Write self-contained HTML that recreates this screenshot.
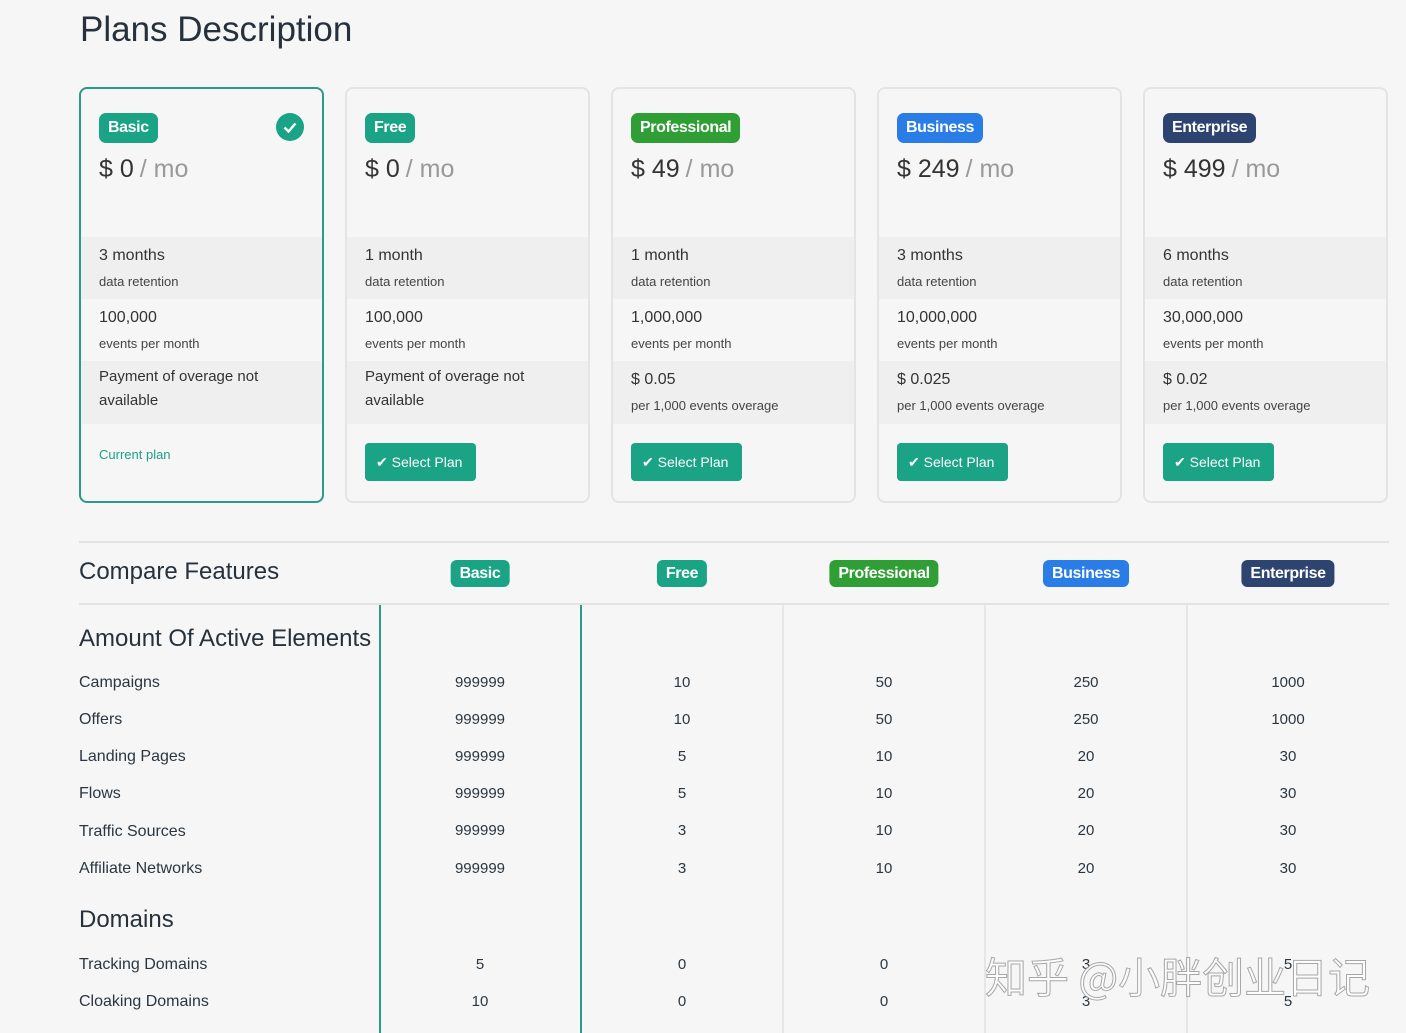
<!DOCTYPE html>
<html><head><meta charset="utf-8"><style>
*{box-sizing:border-box;margin:0;padding:0}
body{width:1406px;height:1033px;background:#f6f6f6;font-family:"Liberation Sans",sans-serif;color:#2f3a45;position:relative;overflow:hidden}
.a{position:absolute}
h1{position:absolute;left:80px;top:10px;font-size:35px;font-weight:normal;color:#27313b}
.card{position:absolute;top:87px;width:245px;height:416px;border:2px solid #e4e4e4;border-radius:8px;background:#f6f6f6;overflow:hidden}
.card.sel{border-color:#2b9a87}
.badge{position:absolute;left:18px;top:24px;height:30px;line-height:29px;padding:0 9px;border-radius:7px;color:#fff;font-weight:bold;font-size:16px;letter-spacing:-0.4px}
.t{background:#1aa385}.g{background:#2f9e35}.b{background:#2a7de6}.e{background:#2e4470}
.price{position:absolute;left:18px;top:66px;font-size:25px;color:#333}
.price span{color:#999;margin-left:6px}
.row{position:absolute;left:0;right:0;padding-left:18px}
.r1{top:148px;height:62px;background:#efefef}
.r2{top:210px;height:62px}
.r3{top:272px;height:63px;background:#efefef}
.big{font-size:16px;color:#333;margin-top:10px}
.sm{font-size:13px;color:#444;margin-top:9px}
.btn{position:absolute;left:18px;top:354px;width:111px;height:38px;background:#1aa385;color:#fff;border-radius:4px;font-size:14px;line-height:38px;padding-left:11px}
.cur{position:absolute;left:18px;top:358px;color:#1aa385;font-size:13px}
.chk{position:absolute;right:18px;top:24px;width:28px;height:28px;border-radius:50%;background:#1aa385}
.hl{position:absolute;left:79px;width:1310px;height:2px;background:#e3e3e3}
.cb{position:absolute;top:560px;height:27px;line-height:27px;padding:0 9px;border-radius:6px;color:#fff;font-weight:bold;font-size:16px;transform:translateX(-50%);letter-spacing:-0.4px}
.vl{position:absolute;top:605px;height:428px;width:2px;background:#e6e6e6}
.lab{position:absolute;left:79px;font-size:16px;color:#2b3640}
.v{position:absolute;font-size:15px;transform:translateX(-50%);color:#2b3640}
h2{position:absolute;left:79px;font-size:24px;font-weight:normal;color:#27313b}
</style></head><body>
<h1>Plans Description</h1>

<div class="card sel" style="left:79px"><div class="badge t">Basic</div><div class="chk"><svg width="28" height="28"><path d="M8.5 14.5l4 4 7-8" stroke="#fff" stroke-width="2.4" fill="none"/></svg></div><div class="price">$ 0<span>/ mo</span></div>
<div class="row r1"><div class="big">3 months</div><div class="sm">data retention</div></div>
<div class="row r2"><div class="big">100,000</div><div class="sm">events per month</div></div>
<div class="row r3"><div style="font-size:15px;line-height:24px;margin-top:4px;color:#333">Payment of overage not<br>available</div></div>
<div class="cur">Current plan</div></div>

<div class="card" style="left:345px"><div class="badge t">Free</div><div class="price">$ 0<span>/ mo</span></div>
<div class="row r1"><div class="big">1 month</div><div class="sm">data retention</div></div>
<div class="row r2"><div class="big">100,000</div><div class="sm">events per month</div></div>
<div class="row r3"><div style="font-size:15px;line-height:24px;margin-top:4px;color:#333">Payment of overage not<br>available</div></div>
<div class="btn">✔ Select Plan</div></div>

<div class="card" style="left:611px"><div class="badge g">Professional</div><div class="price">$ 49<span>/ mo</span></div>
<div class="row r1"><div class="big">1 month</div><div class="sm">data retention</div></div>
<div class="row r2"><div class="big">1,000,000</div><div class="sm">events per month</div></div>
<div class="row r3"><div class="big">$ 0.05</div><div class="sm">per 1,000 events overage</div></div>
<div class="btn">✔ Select Plan</div></div>

<div class="card" style="left:877px"><div class="badge b">Business</div><div class="price">$ 249<span>/ mo</span></div>
<div class="row r1"><div class="big">3 months</div><div class="sm">data retention</div></div>
<div class="row r2"><div class="big">10,000,000</div><div class="sm">events per month</div></div>
<div class="row r3"><div class="big">$ 0.025</div><div class="sm">per 1,000 events overage</div></div>
<div class="btn">✔ Select Plan</div></div>

<div class="card" style="left:1143px"><div class="badge e">Enterprise</div><div class="price">$ 499<span>/ mo</span></div>
<div class="row r1"><div class="big">6 months</div><div class="sm">data retention</div></div>
<div class="row r2"><div class="big">30,000,000</div><div class="sm">events per month</div></div>
<div class="row r3"><div class="big">$ 0.02</div><div class="sm">per 1,000 events overage</div></div>
<div class="btn">✔ Select Plan</div></div>

<div class="hl" style="top:541px"></div>
<div class="a" style="left:79px;top:558px;font-size:24px;color:#27313b">Compare Features</div>
<div class="cb t" style="left:480px">Basic</div>
<div class="cb t" style="left:682px">Free</div>
<div class="cb g" style="left:884px">Professional</div>
<div class="cb b" style="left:1086px">Business</div>
<div class="cb e" style="left:1288px">Enterprise</div>
<div class="hl" style="top:603px"></div>
<div class="vl" style="left:379px;background:#2b9a87"></div>
<div class="vl" style="left:580px;background:#2b9a87"></div>
<div class="vl" style="left:782px"></div>
<div class="vl" style="left:984px"></div>
<div class="vl" style="left:1186px"></div>

<h2 style="top:625px">Amount Of Active Elements</h2>
<div class="lab" style="top:674px">Campaigns</div>
<div class="lab" style="top:711px">Offers</div>
<div class="lab" style="top:748px">Landing Pages</div>
<div class="lab" style="top:785px">Flows</div>
<div class="lab" style="top:823px">Traffic Sources</div>
<div class="lab" style="top:860px">Affiliate Networks</div>
<h2 style="top:906px">Domains</h2>
<div class="lab" style="top:956px">Tracking Domains</div>
<div class="lab" style="top:993px">Cloaking Domains</div>

<div id="vals"></div>
<script>
var rows=[[674,["999999","10","50","250","1000"]],[711,["999999","10","50","250","1000"]],[748,["999999","5","10","20","30"]],[785,["999999","5","10","20","30"]],[822,["999999","3","10","20","30"]],[860,["999999","3","10","20","30"]],[956,["5","0","0","3","5"]],[993,["10","0","0","3","5"]]];
var cx=[480,682,884,1086,1288],h="";
rows.forEach(function(r){r[1].forEach(function(v,i){h+='<div class="v" style="left:'+cx[i]+'px;top:'+r[0]+'px">'+v+'</div>';});});
document.getElementById("vals").innerHTML=h;
</script>
<div class="a" style="left:985px;top:945px;font-size:42px;color:#fff;-webkit-text-stroke:1px #9a9a9a;font-family:'Noto Sans CJK SC',sans-serif;opacity:.85">知乎 @小胖创业日记</div>
</body></html>
